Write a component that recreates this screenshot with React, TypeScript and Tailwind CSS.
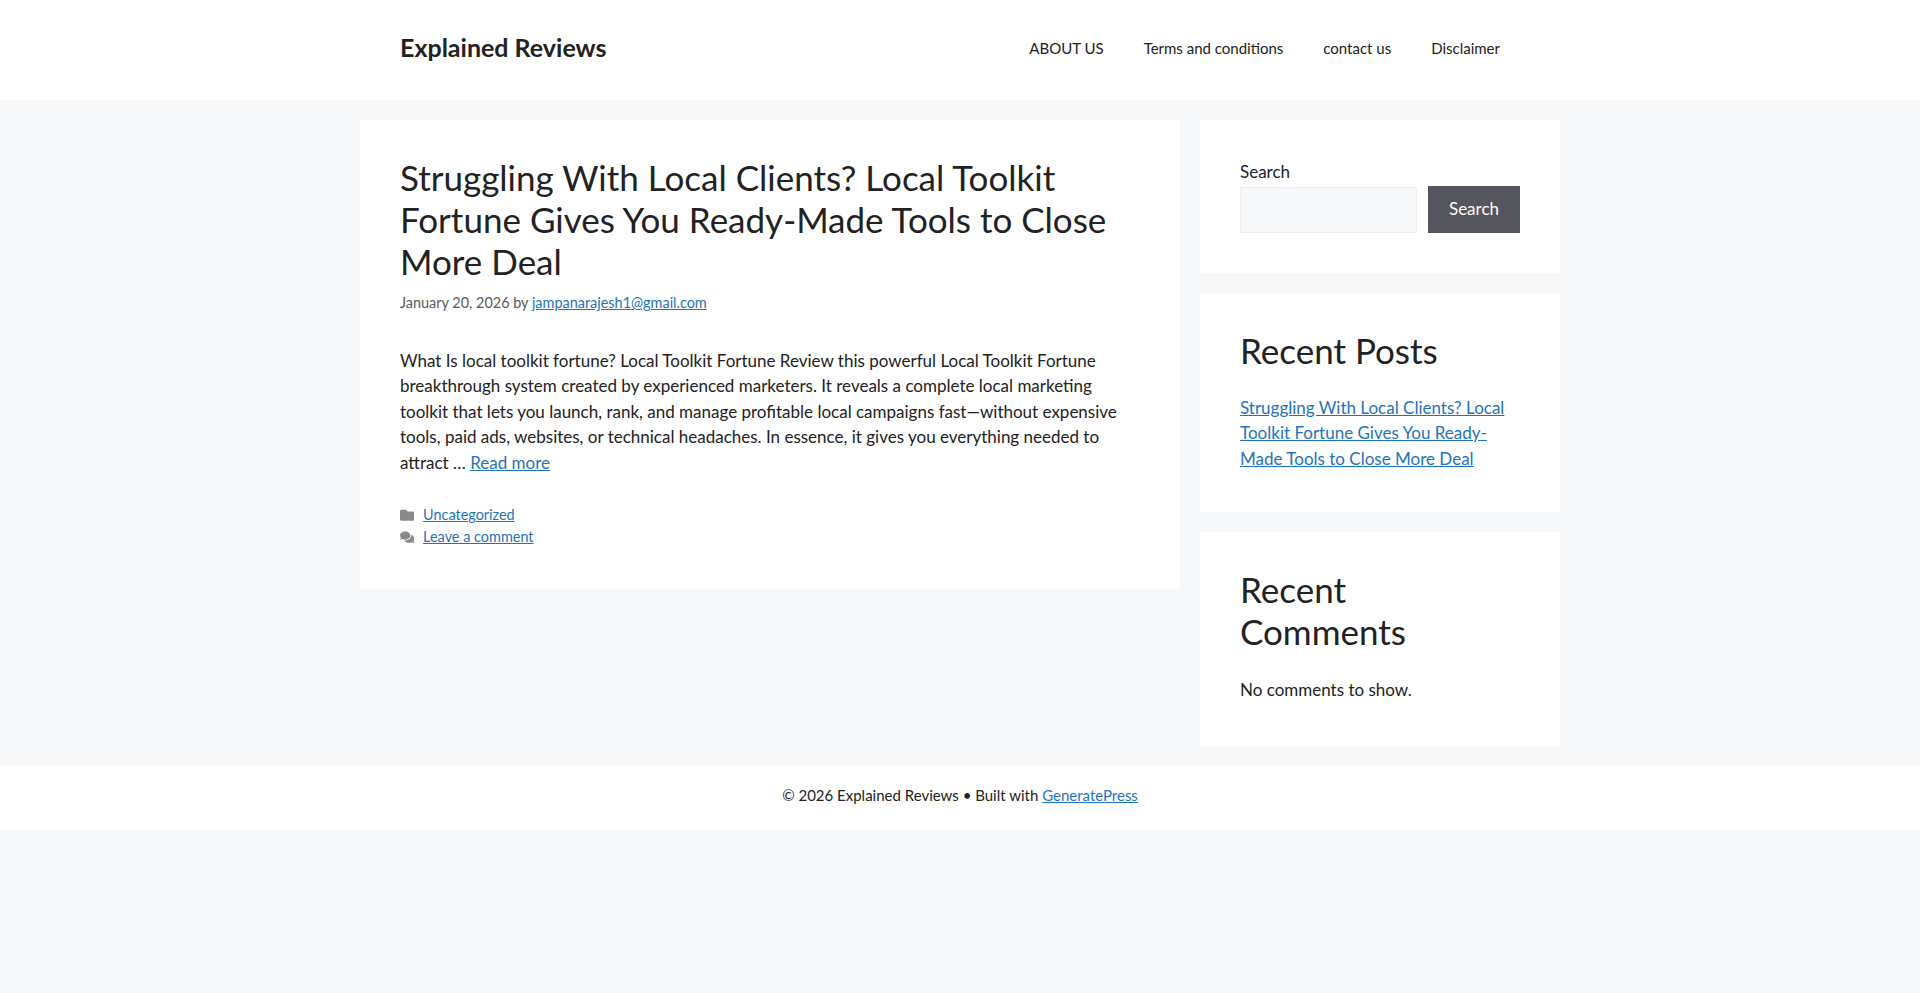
const Folder = () => (
  <svg viewBox="0 0 512 512" className="w-[1em] h-[1em] mr-[0.6em] shrink-0 fill-[#595959] opacity-70" aria-hidden="true">
    <path d="M464 128H272l-54.63-54.63c-6-6-14.14-9.37-22.63-9.37H48C21.49 64 0 85.49 0 112v288c0 26.51 21.49 48 48 48h416c26.51 0 48-21.49 48-48V176c0-26.51-21.49-48-48-48z" />
  </svg>
);
const Comments = () => (
  <svg viewBox="0 0 576 512" className="w-[1em] h-[1em] mr-[0.6em] shrink-0 fill-[#595959] opacity-70" aria-hidden="true">
    <path d="M416 192c0-88.4-93.1-160-208-160S0 103.6 0 192c0 34.3 14.1 65.9 38 92-13.4 30.2-35.5 54.2-35.8 54.5-2.2 2.3-2.8 5.7-1.5 8.7S4.8 352 8 352c36.6 0 66.9-12.3 88.7-25 32.2 15.7 70.3 25 111.3 25 114.9 0 208-71.6 208-160zm122 220c23.9-26 38-57.7 38-92 0-66.9-53.5-124.2-129.3-148.1.9 6.6 1.3 13.3 1.3 20.1 0 105.9-107.7 192-240 192-10.8 0-21.3-.8-31.7-1.9C207.8 439.6 281.8 480 368 480c41 0 79.1-9.2 111.3-25 21.8 12.7 52.1 25 88.7 25 3.2 0 6.1-1.9 7.3-4.8 1.3-2.9.7-6.3-1.5-8.7-.3-.3-22.4-24.2-35.8-54.5z" />
  </svg>
);

const link = "text-[#1e73be] underline";

export default function App() {
  return (
    <div className="min-h-screen bg-[#f7f8f9] text-[#222222] text-[17px] leading-[1.5] font-['Lato',sans-serif]">
      <header className="bg-white">
        <div className="mx-auto w-[1200px] h-[100px] px-10 pb-1 flex items-center justify-between">
          <a className="text-[25px] font-bold leading-[1.5]">Explained Reviews</a>
          <nav className="flex text-[15px] leading-[60px]">
            <a className="px-5">ABOUT US</a>
            <a className="px-5">Terms and conditions</a>
            <a className="px-5">contact us</a>
            <a className="px-5">Disclaimer</a>
          </nav>
        </div>
      </header>

      <div className="mx-auto w-[1200px] pt-5 flex gap-5 items-start">
        <main className="w-[820px] bg-white p-10">
          <h2 className="text-[35px] leading-[1.2] font-normal -mt-1">
            Struggling With Local Clients? Local Toolkit Fortune Gives You Ready-Made Tools to Close More Deal
          </h2>
          <div className="mt-[10px] text-[14.45px] text-[#595959]">
            January 20, 2026 by <a className={link}>jampanarajesh1@gmail.com</a>
          </div>
          <p className="mt-[34px]">
            What Is local toolkit fortune? Local Toolkit Fortune Review this powerful Local Toolkit Fortune breakthrough system created by experienced marketers. It reveals a complete local marketing toolkit that lets you launch, rank, and manage profitable local campaigns fast—without expensive tools, paid ads, websites, or technical headaches. In essence, it gives you everything needed to attract … <a className={link}>Read more</a>
          </p>
          <div className="mt-[29px] text-[14.45px] leading-[22.2px] text-[#595959]">
            <div className="flex items-center"><Folder /><a className={link}>Uncategorized</a></div>
            <div className="flex items-center"><Comments /><a className={link}>Leave a comment</a></div>
          </div>
        </main>

        <aside className="w-[360px] flex flex-col gap-5">
          <section className="bg-white p-10">
            <label className="block -mt-px mb-px">Search</label>
            <div className="flex">
              <div className="flex-1 min-w-0 h-[46px] mt-px bg-[#f7f8f9] border border-[#eeeeee]" />
              <button className="ml-[10.6px] w-[92px] h-[47px] bg-[#55555e] text-white">Search</button>
            </div>
          </section>
          <section className="bg-white pt-10 px-10 pb-[41px]">
            <h2 className="text-[35px] leading-[1.2] font-normal -mt-1 mb-6">Recent Posts</h2>
            <a className={link}>Struggling With Local Clients? Local Toolkit Fortune Gives You Ready-Made Tools to Close More Deal</a>
          </section>
          <section className="bg-white pt-10 px-10 pb-[43.5px]">
            <h2 className="text-[35px] leading-[1.2] font-normal -mt-1 mb-[25px]">Recent Comments</h2>
            <p>No comments to show.</p>
          </section>
        </aside>
      </div>

      <footer className="mt-5 bg-white pt-[18px] pb-[23px] text-center text-[15px]">
        © 2026 Explained Reviews • Built with <a className={link}>GeneratePress</a>
      </footer>
    </div>
  );
}
